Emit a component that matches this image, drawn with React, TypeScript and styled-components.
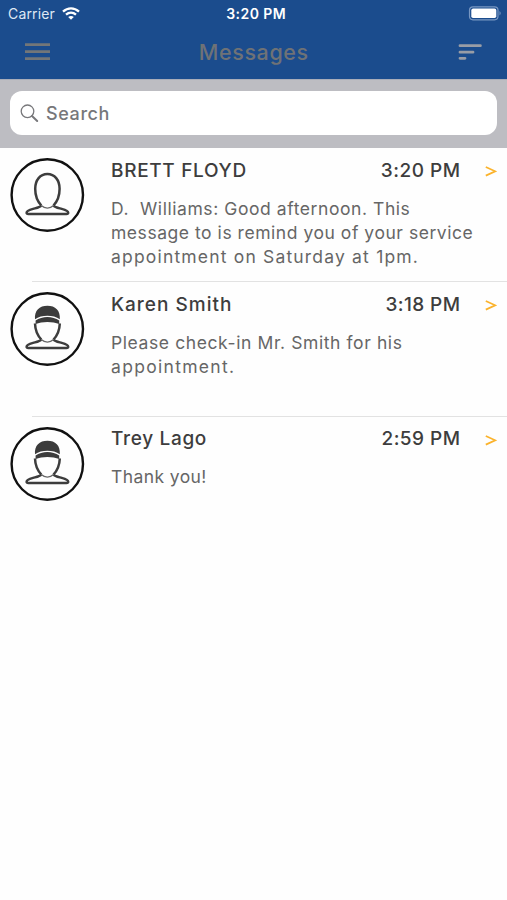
import React from "react";
import styled, { createGlobalStyle } from "styled-components";

const GlobalStyle = createGlobalStyle`
  * { box-sizing: border-box; }
  body { margin: 0; background: #fff; font-family: Inter, "Open Sans", sans-serif; }
`;

const Screen = styled.main`
  width: 507px;
  height: 900px;
  overflow: hidden;
  background: #fefefe;
`;

const TopBar = styled.header`
  height: 79px;
  background: #1b4c8d;
`;

const StatusBar = styled.div`
  display: grid;
  grid-template-columns: 1fr auto 1fr;
  align-items: center;
  height: 27px;
  padding: 0 5px 0 8px;
  color: #fff;
  font-size: 14px;
  svg { display: block; }
`;

const Carrier = styled.div`
  display: flex;
  align-items: center;
  gap: 7px;
  color: #dfe8f4;
`;

const Clock = styled.div`
  font-weight: 600;
  padding-left: 2px;
`;

const Battery = styled.div`
  justify-self: end;
`;

const NavBar = styled.nav`
  display: grid;
  grid-template-columns: 1fr auto 1fr;
  align-items: center;
  height: 50px;
  padding: 0 25px 0 25px;
  svg { display: block; }
`;

const Title = styled.h1`
  margin: 0;
  color: #6f7276;
  font-size: 21.5px;
  line-height: 28px;
  font-weight: 500;
`;

const SortButton = styled.div`
  justify-self: end;
`;

const SearchBar = styled.div`
  height: 69px;
  padding: 11px 10px 13px;
  background: #bdbdc2;
  border-top: 1px solid #a9adb9;
`;

const SearchField = styled.div`
  display: flex;
  align-items: center;
  gap: 7px;
  height: 44px;
  padding-left: 10px;
  border-radius: 12px;
  background: #fff;
  color: #77777a;
  font-size: 18px;
  font-weight: 500;
`;

const List = styled.section``;

const Row = styled.article`
  display: grid;
  grid-template-columns: 101px 1fr;
  height: 134.4px;
  padding: 9px 10px 0;
`;

const Divider = styled.div`
  height: 1px;
  margin: -1px 0 0 32px;
  background: #e2e2e2;
`;

const Content = styled.div`
  min-width: 0;
`;

const Heading = styled.div`
  display: grid;
  grid-template-columns: 1fr auto 37px;
  align-items: center;
  height: 26px;
  color: #3d3d3d;
  font-size: 19px;
  font-weight: 500;
`;

const Chevron = styled.div`
  justify-self: end;
  padding-top: 2px;
  svg { display: block; }
`;

const Body = styled.div`
  padding-top: 13.6px;
  color: #666;
  font-size: 17.5px;
  line-height: 24px;
`;

const Track = styled.span<{ $spacing: number }>`
  margin-right: ${(p) => -p.$spacing}px;
  letter-spacing: ${(p) => p.$spacing}px;
  white-space: pre;
`;

const Line = styled(Track)`
  display: block;
`;

type Text = { text: string; spacing: number };

type Message = { name: Text; time: Text; lines: Text[]; cap: boolean };

const messages: Message[] = [
  {
    name: { text: "BRETT FLOYD", spacing: 0.68 },
    time: { text: "3:20 PM", spacing: 0.5 },
    cap: false,
    lines: [
      { text: "D.  Williams: Good afternoon. This", spacing: 0.57 },
      { text: "message to is remind you of your service", spacing: 0.54 },
      { text: "appointment on Saturday at 1pm.", spacing: 1.18 },
    ],
  },
  {
    name: { text: "Karen Smith", spacing: 1 },
    time: { text: "3:18 PM", spacing: 0.4 },
    cap: true,
    lines: [
      { text: "Please check-in Mr. Smith for his", spacing: 0.6 },
      { text: "appointment.", spacing: 1.3 },
    ],
  },
  {
    name: { text: "Trey Lago", spacing: 0.68 },
    time: { text: "2:59 PM", spacing: 0.45 },
    cap: true,
    lines: [{ text: "Thank you!", spacing: 0.4 }],
  },
];

const Avatar = ({ cap }: { cap: boolean }) => (
  <svg width="75" height="76" viewBox="0 0 75 76" fill="none">
    <circle cx="37.3" cy="38" r="35.7" stroke="#111" strokeWidth="2.4" />
    <g stroke="#3d3d3d" strokeWidth="2.5" strokeLinejoin="round">
      {cap ? (
        <path d="M31.3 48.5C27.5 44.5 25.2 38.5 25 32.5M43.500 48.500C47.300 44.500 49.600 38.500 49.800 32.500" />
      ) : (
        <path d="M31.3 48.5C27.500 44.500 25.200 38 25.200 31.800c0-8.800 5-14.800 12.200-14.800s12.200 6 12.200 14.800c0 6.200-2.300 12.700-6.100 16.700" />
      )}
      <path d="M31.3 48.5c-1.5 2-5 2.500-8.200 3.400-4.200 1.100-6.500 2.500-6.500 3.900 0 .8.700 1.100 1.700 1.100h38.200c1 0 1.700-.3 1.700-1.100 0-1.400-2.300-2.800-6.500-3.900-3.200-.9-6.700-1.400-8.200-3.400" />
    </g>
    <path d="M31.3 48.5c3.600 3.400 8.600 3.400 12.200 0" strokeWidth="1.3" stroke="#666" />
    {cap && (
      <g fill="#3b3b3b">
        <path d="M25 28.300c-.7-8.800 4.500-13.500 12.400-13.500s13.100 4.700 12.400 13.500c-6.500-4.600-18.300-4.600-24.800 0Z" />
        <path d="M25.600 29.500c6.500-4.700 17.100-4.700 23.600 0v3.400c-6.500-2.700-17.100-2.700-23.600 0Z" />
      </g>
    )}
  </svg>
);

export default function App() {
  return (
    <Screen>
      <GlobalStyle />
      <TopBar>
        <StatusBar>
          <Carrier>
            <Track $spacing={0.15}>Carrier</Track>
            <svg width="18" height="13" viewBox="0 0 18 13" fill="none" stroke="#fff" strokeWidth="2.3">
              <path d="M1 4.600c4.700-4.300 11.300-4.300 16 0M4 7.700c3-2.700 7-2.700 10 0" />
              <path d="M6.200 10c1.700-1.400 3.900-1.400 5.600 0L9 12.800Z" fill="#fff" stroke="none" />
            </svg>
          </Carrier>
          <Clock>
            <Track $spacing={0.45}>3:20 PM</Track>
          </Clock>
          <Battery>
            <svg width="34" height="15" viewBox="0 0 34 15" fill="none">
              <rect x="1.5" y=".8" width="28.5" height="13" rx="3.5" stroke="#7897c2" strokeWidth="1.2" />
              <rect x="3.3" y="2.6" width="25" height="9.4" rx="1.8" fill="#fff" />
              <path d="M31.500 5v4.500c1.600-.7 1.600-3.800 0-4.500Z" fill="#7897c2" />
            </svg>
          </Battery>
        </StatusBar>
        <NavBar>
          <svg width="26" height="18" viewBox="0 0 26 18" fill="#737678">
            <path d="M0 .2h25v2.800H0zM0 7.200h25V10H0zM0 14.200h25V17H0z" />
          </svg>
          <Title>
            <Track $spacing={0.6}>Messages</Track>
          </Title>
          <SortButton>
            <svg width="24" height="17" viewBox="0 0 24 17" stroke="#999da6" strokeWidth="2.8" strokeLinecap="round">
              <path d="M2 1.700h20.400M2 8.200h13M2 14.300H7" />
            </svg>
          </SortButton>
        </NavBar>
      </TopBar>
      <SearchBar>
        <SearchField>
          <svg width="19" height="19" viewBox="0 0 19 19" fill="none" stroke="#78787b">
            <circle cx="7.5" cy="7.3" r="6.3" strokeWidth="1.3" />
            <path d="m12 12 5.200 5" strokeWidth="2" strokeLinecap="round" />
          </svg>
          <Track $spacing={0.6}>Search</Track>
        </SearchField>
      </SearchBar>
      <List>
        {messages.map((m, i) => (
          <React.Fragment key={m.name.text}>
            {i > 0 && <Divider />}
            <Row>
              <Avatar cap={m.cap} />
              <Content>
                <Heading>
                  <Track $spacing={m.name.spacing}>{m.name.text}</Track>
                  <Track $spacing={m.time.spacing}>{m.time.text}</Track>
                  <Chevron>
                    <svg width="12" height="12" viewBox="0 0 12 12" fill="none" stroke="#fbb32c" strokeWidth="1.8">
                      <path d="m.8 2 9.400 4.300L.8 10.600" />
                    </svg>
                  </Chevron>
                </Heading>
                <Body>
                  {m.lines.map((line) => (
                    <Line key={line.text} $spacing={line.spacing}>
                      {line.text}
                    </Line>
                  ))}
                </Body>
              </Content>
            </Row>
          </React.Fragment>
        ))}
      </List>
    </Screen>
  );
}
